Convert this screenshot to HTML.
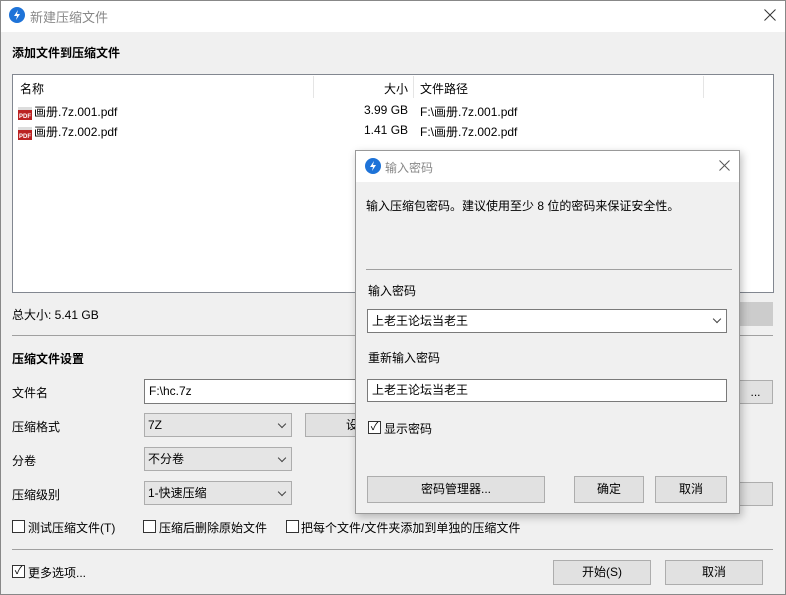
<!DOCTYPE html>
<html><head><meta charset="utf-8"><style>
*{margin:0;padding:0;box-sizing:border-box}
body{width:786px;height:595px;overflow:hidden;background:#f0f0f0;font-family:"Liberation Sans","Noto Sans CJK SC",sans-serif;font-size:12px;color:#000;position:relative}
.a{position:absolute}
.btn{position:absolute;background:#e1e1e1;border:1px solid #adadad;text-align:center;font-size:12px}
.inp{position:absolute;background:#fff;border:1px solid #7a7a7a;padding-left:4px}
.sel{position:absolute;background:#e5e5e5;border:1px solid #adadad;padding-left:3px}
.cb{position:absolute;width:13px;height:13px;border:1px solid #333;background:#fff}
.chev{position:absolute;right:6px;top:7px;width:6px;height:6px;border-right:1px solid #444;border-bottom:1px solid #444;transform:rotate(45deg)}
.hl{position:absolute;height:1px;background:#a0a0a0}
.pdf{display:inline-block;width:14px;height:13px;background:#b22;color:#fff;font-size:6px;font-weight:bold;line-height:7px;vertical-align:-2px;margin-right:2px;padding-top:4px;text-align:center;border-top:3px solid #ddd}
</style></head><body>
<div class="a" style="left:0;top:0;width:786px;height:595px;border:1px solid #888"></div>
<div class="a" style="top:1px;left:1px;width:784px;height:31px;background:#fff"></div>
<svg class="a" style="left:9px;top:7px" width="16" height="16"><circle cx="8" cy="8" r="8" fill="#1e73d8"/><path d="M9 3 L5 9 H8 L7 13 L11 7 H8 Z" fill="#fff"/></svg>
<div class="a" style="left:30px;top:7px;color:#888;font-size:13px">新建压缩文件</div>
<svg class="a" style="left:764px;top:9px" width="12" height="12"><path d="M0.5 0.5L11.5 11.5M11.5 0.5L0.5 11.5" stroke="#333" stroke-width="1"/></svg>
<div class="a" style="left:12px;top:44px;font-weight:bold">添加文件到压缩文件</div>
<div class="a" style="left:12px;top:74px;width:762px;height:219px;background:#fff;border:1px solid #828790"></div>
<div class="a" style="left:313px;top:76px;width:1px;height:22px;background:#e5e5e5"></div>
<div class="a" style="left:413px;top:76px;width:1px;height:22px;background:#e5e5e5"></div>
<div class="a" style="left:703px;top:76px;width:1px;height:22px;background:#e5e5e5"></div>
<div class="a" style="left:20px;top:80px">名称</div>
<div class="a" style="left:384px;top:80px">大小</div>
<div class="a" style="left:420px;top:80px">文件路径</div>
<div class="a" style="left:18px;top:103px"><span class="pdf">PDF</span>画册.7z.001.pdf</div>
<div class="a" style="left:18px;top:123px"><span class="pdf">PDF</span>画册.7z.002.pdf</div>
<div class="a" style="left:364px;top:103px">3.99 GB</div>
<div class="a" style="left:364px;top:123px">1.41 GB</div>
<div class="a" style="left:420px;top:103px">F:\画册.7z.001.pdf</div>
<div class="a" style="left:420px;top:123px">F:\画册.7z.002.pdf</div>
<div class="a" style="left:12px;top:306px">总大小: 5.41 GB</div>
<div class="btn" style="left:738px;top:302px;width:35px;height:24px;background:#ccc;border-color:#ccc"></div>
<div class="hl" style="left:12px;top:335px;width:761px"></div>
<div class="a" style="left:12px;top:350px;font-weight:bold">压缩文件设置</div>
<div class="a" style="left:12px;top:384px">文件名</div>
<div class="inp" style="left:144px;top:379px;width:220px;height:25px;line-height:23px">F:\hc.7z</div>
<div class="btn" style="left:738px;top:380px;width:35px;height:24px;line-height:22px">...</div>
<div class="a" style="left:12px;top:418px">压缩格式</div>
<div class="sel" style="left:144px;top:413px;width:148px;height:24px;line-height:22px">7Z<span class="chev"></span></div>
<div class="btn" style="left:305px;top:413px;width:60px;height:24px;line-height:22px;text-align:right;padding-right:6px">设</div>
<div class="a" style="left:12px;top:452px">分卷</div>
<div class="sel" style="left:144px;top:447px;width:148px;height:24px;line-height:22px">不分卷<span class="chev"></span></div>
<div class="a" style="left:12px;top:486px">压缩级别</div>
<div class="sel" style="left:144px;top:481px;width:148px;height:24px;line-height:22px">1-快速压缩<span class="chev"></span></div>
<div class="btn" style="left:738px;top:482px;width:35px;height:24px"></div>
<div class="cb" style="left:12px;top:520px"></div><div class="a" style="left:28px;top:519px">测试压缩文件(T)</div>
<div class="cb" style="left:143px;top:520px"></div><div class="a" style="left:159px;top:519px">压缩后删除原始文件</div>
<div class="cb" style="left:286px;top:520px"></div><div class="a" style="left:301px;top:519px">把每个文件/文件夹添加到单独的压缩文件</div>
<div class="hl" style="left:12px;top:549px;width:761px"></div>
<div class="cb" style="left:12px;top:565px;font-size:11px;line-height:11px;text-align:center">✓</div><div class="a" style="left:28px;top:564px">更多选项...</div>
<div class="btn" style="left:553px;top:560px;width:98px;height:25px;line-height:23px">开始(S)</div>
<div class="btn" style="left:665px;top:560px;width:98px;height:25px;line-height:23px">取消</div>

<div class="a" style="left:355px;top:150px;width:385px;height:364px;background:#f0f0f0;border:1px solid #999;box-shadow:2px 3px 8px rgba(0,0,0,.25)">
<div class="a" style="left:0;top:0;width:383px;height:31px;background:#fff"></div>
<svg class="a" style="left:9px;top:7px" width="16" height="16"><circle cx="8" cy="8" r="8" fill="#1e73d8"/><path d="M9 3 L5 9 H8 L7 13 L11 7 H8 Z" fill="#fff"/></svg>
<div class="a" style="left:29px;top:8px;color:#888">输入密码</div>
<svg class="a" style="left:363px;top:9px" width="11" height="11"><path d="M0.5 0.5L10.5 10.5M10.5 0.5L0.5 10.5" stroke="#555" stroke-width="1"/></svg>
<div class="a" style="left:10px;top:46px">输入压缩包密码。建议使用至少 8 位的密码来保证安全性。</div>
<div class="hl" style="left:10px;top:118px;width:366px;background:#a0a0a0"></div>
<div class="a" style="left:12px;top:131px">输入密码</div>
<div class="inp" style="left:11px;top:158px;width:360px;height:24px;line-height:22px">上老王论坛当老王<span class="chev" style="top:6px"></span></div>
<div class="a" style="left:12px;top:198px">重新输入密码</div>
<div class="inp" style="left:11px;top:228px;width:360px;height:23px;line-height:21px">上老王论坛当老王</div>
<div class="cb" style="left:12px;top:270px;font-size:11px;line-height:11px;text-align:center">✓</div>
<div class="a" style="left:28px;top:269px">显示密码</div>
<div class="btn" style="left:11px;top:325px;width:178px;height:27px;line-height:25px">密码管理器...</div>
<div class="btn" style="left:218px;top:325px;width:70px;height:27px;line-height:25px">确定</div>
<div class="btn" style="left:299px;top:325px;width:72px;height:27px;line-height:25px">取消</div>
</div>
</body></html>
